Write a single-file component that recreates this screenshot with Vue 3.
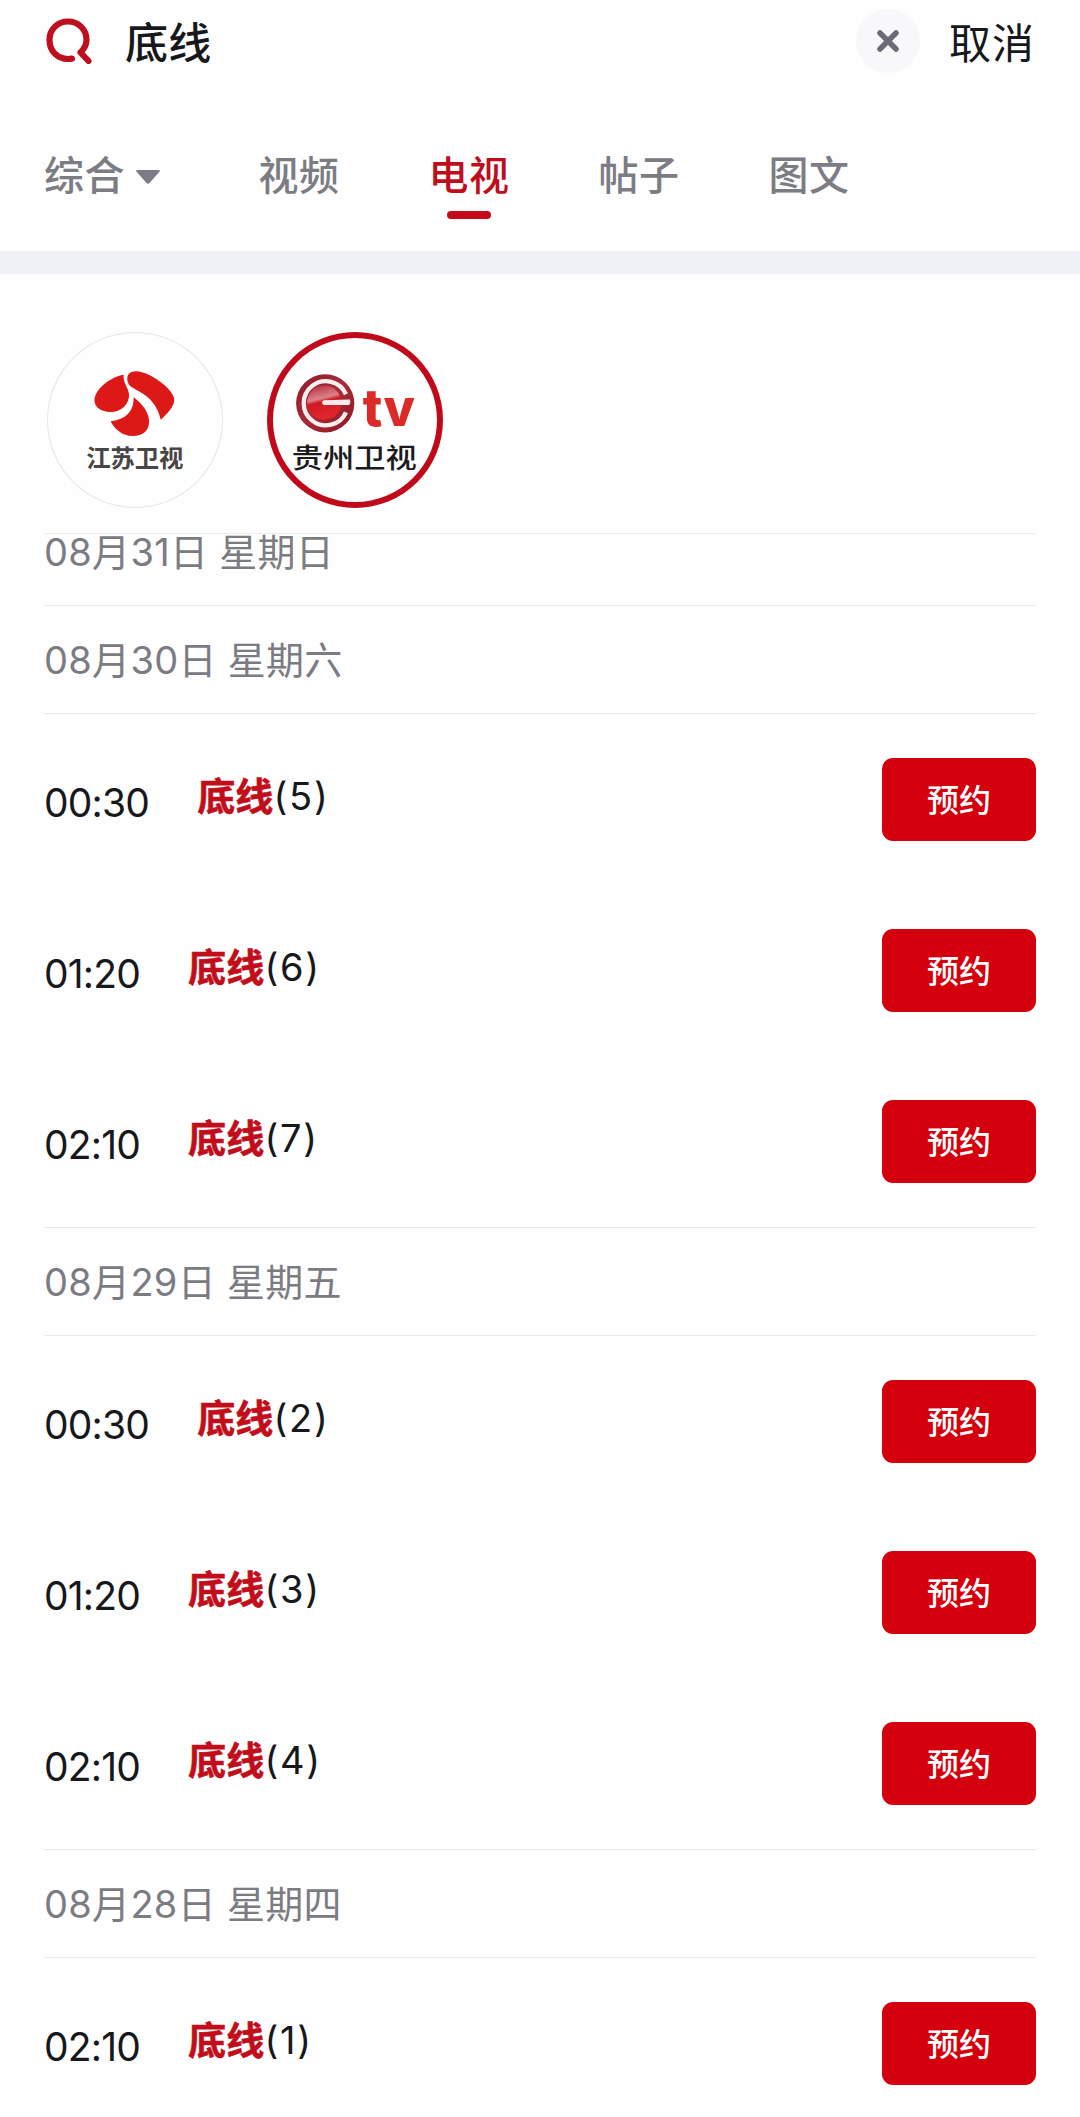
<script setup>
    import { ref } from 'vue';

    const keyword = ref('底线');
    const activeTab = ref('tv');
    const activeChannel = ref('guizhou');

    const tabs = [
        { id: 'all', label: '综合', dropdown: true },
        { id: 'video', label: '视频' },
        { id: 'tv', label: '电视' },
        { id: 'post', label: '帖子' },
        { id: 'article', label: '图文' }
    ]

    const days = [
        { date: '08月31日 星期日', shows: [] },
        {
            date: '08月30日 星期六',
            shows: [
                { time: '00:30', episode: 5 },
                { time: '01:20', episode: 6 },
                { time: '02:10', episode: 7 }
            ]
        },
        {
            date: '08月29日 星期五',
            shows: [
                { time: '00:30', episode: 2 },
                { time: '01:20', episode: 3 },
                { time: '02:10', episode: 4 }
            ]
        },
        {
            date: '08月28日 星期四',
            shows: [
                { time: '02:10', episode: 1 }
            ]
        }
    ]
</script>

<template>
    <div class="page">
        <header class="search-bar">
            <svg class="search-icon" viewBox="0 0 46 46">
                <path d="M26 40.6 C12 43 3.5 33 3.5 22 C3.5 11 12 3.5 22 3.5 C32 3.5 40.5 11 40.5 22 C40.5 27 38 31 34.5 34.5 L42.5 43" />
            </svg>
            <span class="keyword">{{ keyword }}</span>
            <button class="clear-button" @click="keyword = ''">
                <svg viewBox="0 0 24 24">
                    <path d="M4 4 L20 20 M20 4 L4 20" />
                </svg>
            </button>
            <button class="cancel-button">取消</button>
        </header>

        <nav class="tabs">
            <button
                v-for="tab in tabs"
                :key="tab.id"
                class="tab"
                :class="{ active: tab.id === activeTab, dropdown: tab.dropdown }"
                @click="activeTab = tab.id"
            >
                <span>{{ tab.label }}</span>
                <svg v-if="tab.dropdown" class="arrow" viewBox="0 0 24 14">
                    <path d="M1.5 0 H22.5 Q25 0 23 2.2 L13.5 13 Q12 14.6 10.5 13 L1 2.2 Q-1 0 1.5 0 Z" />
                </svg>
            </button>
        </nav>

        <div class="channels">
            <button class="channel" :class="{ selected: activeChannel === 'jiangsu' }" @click="activeChannel = 'jiangsu'">
                <svg viewBox="0 0 526 526">
                    <g fill="#dc1917">
                        <path d="M229 128 C190 134 142 172 142 205 C142 226 163 239 190 239 C225 239 247 213 245 185 C243 165 227 154 229 128 Z" />
                        <path d="M241 148 C236 127 248 116 268 117 C306 119 372 165 380 198 C384 222 356 247 340 262 C331 223 309 196 276 178 C257 167 245 163 241 148 Z" />
                        <path d="M259 195 C290 219 306 244 305 270 C304 297 285 311 257 311 C224 311 203 291 190 267 C226 263 260 245 259 195 Z" />
                    </g>
                    <text class="jiangsu-name" x="117" y="403" textLength="291">江苏卫视</text>
                </svg>
            </button>
            <button class="channel" :class="{ selected: activeChannel === 'guizhou' }" @click="activeChannel = 'guizhou'">
                <svg viewBox="0 0 526 526">
                    <defs>
                        <linearGradient id="rim" x1="0" y1="0" x2="1" y2="1">
                            <stop offset="0" stop-color="#8e1c2a" />
                            <stop offset="0.5" stop-color="#a82c38" />
                            <stop offset="1" stop-color="#8e1420" />
                        </linearGradient>
                        <linearGradient id="ball" x1="0" y1="0" x2="0.25" y2="1">
                            <stop offset="0" stop-color="#b52434" />
                            <stop offset="0.45" stop-color="#dc8288" />
                            <stop offset="0.55" stop-color="#cf1a25" />
                            <stop offset="1" stop-color="#e0262b" />
                        </linearGradient>
                    </defs>
                    <circle cx="174" cy="213" r="87" fill="url(#rim)" />
                    <path d="M236 186 A66 66 0 1 0 236 240" fill="none" stroke="#f9eeee" stroke-width="13" />
                    <circle cx="171" cy="211" r="51" fill="url(#ball)" />
                    <path d="M169 204 L248 202 Q252 210 246 218 L169 218 Q160 211 169 204 Z" fill="#f8e9ea" />
                    <text class="tv-mark" x="286" y="282" textLength="156" lengthAdjust="spacingAndGlyphs">tv</text>
                    <text class="guizhou-name" x="74" y="405" textLength="374" lengthAdjust="spacingAndGlyphs">贵州卫视</text>
                </svg>
            </button>
        </div>

        <main class="schedule">
            <section v-for="day in days" :key="day.date" class="day">
                <h2 class="date">{{ day.date }}</h2>
                <ul v-if="day.shows.length" class="shows">
                    <li v-for="show in day.shows" :key="show.episode" class="show">
                        <span class="time">{{ show.time }}</span>
                        <span class="title"><em>底线</em>({{ show.episode }})</span>
                        <button class="book-button">预约</button>
                    </li>
                </ul>
            </section>
        </main>
    </div>
</template>

<style>
    body {
        background-color: #fefefe;
    }
</style>

<style scoped>
    .page {
        height: 2117px;
        overflow: hidden;
        font-family: Inter, "Noto Sans CJK SC", sans-serif;
        color: #17181c;
    }

    button {
        padding: 0;
        border: none;
        background: none;
        font-family: inherit;
        color: inherit;
    }

    .search-bar {
        display: flex;
        align-items: center;
        height: 82px;
        padding: 0 45px 0 46px;
    }

    .search-icon {
        width: 46px;
        height: 46px;
        fill: none;
        stroke: #bd0f1e;
        stroke-width: 6.2;
        stroke-linecap: round;
        stroke-linejoin: round;
    }

    .keyword {
        flex: 1;
        margin-left: 33px;
        padding-bottom: 3px;
        font-size: 43px;
        font-weight: 500;
        letter-spacing: 0.3px;
    }

    .clear-button {
        display: flex;
        align-items: center;
        justify-content: center;
        width: 64px;
        height: 64px;
        border-radius: 50%;
        background-color: #f8f8fa;
    }

    .clear-button svg {
        width: 24px;
        height: 24px;
        stroke: #6b6b78;
        stroke-width: 5.5;
        stroke-linecap: round;
    }

    .cancel-button {
        margin-left: 29px;
        padding-bottom: 2px;
        font-size: 42px;
        letter-spacing: 1px;
    }

    .tabs {
        display: flex;
        gap: 88px;
        height: 169px;
        padding-left: 44px;
        border-bottom: 23px solid #eff1f6;
    }

    .tab {
        display: flex;
        flex-direction: column;
        align-items: center;
        width: 82px;
        padding-top: 63px;
        font-size: 40px;
        font-weight: 500;
        line-height: 61px;
        letter-spacing: 0.5px;
        white-space: nowrap;
        color: #7b7c84;
    }

    .tab.dropdown {
        flex-direction: row;
        align-items: flex-start;
        width: 126px;
        gap: 11px;
    }

    .tab.active {
        color: #c00d1c;
    }

    .tab.active::after {
        content: "";
        width: 44px;
        height: 8px;
        margin-top: 5px;
        border-radius: 4px;
        background-color: #c60a1a;
    }

    .arrow {
        width: 24px;
        height: 14px;
        margin-top: 25px;
        fill: #7b7c88;
    }

    .channels {
        display: flex;
        gap: 44px;
        height: 201px;
        padding: 58px 47px 0;
    }

    .channel {
        display: flex;
        width: 176px;
        height: 176px;
        border-radius: 50%;
        box-shadow: inset 0 0 0 1px #e6e6e8;
    }

    .channel.selected {
        box-shadow: inset 0 0 0 6px #c00a1b;
    }

    .channel svg {
        width: 176px;
        height: 176px;
    }

    .jiangsu-name {
        font-size: 73px;
        font-weight: 700;
        fill: #484545;
    }

    .guizhou-name {
        font-size: 80px;
        font-weight: 500;
        fill: #1c1a1b;
    }

    .tv-mark {
        font-size: 154px;
        font-weight: 800;
        fill: #dc2a26;
    }

    .schedule {
        margin: 0 44px;
        border-top: 1px solid #ececee;
    }

    .date {
        height: 107px;
        margin: 0;
        border-bottom: 1px solid #e9e9eb;
        font-size: 38px;
        font-weight: 400;
        letter-spacing: 0.3px;
        line-height: 109px;
        color: #7b7b82;
    }

    /* the first day sits right under the channel row */
    .day:first-child .date {
        height: 71px;
        line-height: 37px;
    }

    .shows {
        margin: 0;
        padding: 0;
        list-style: none;
        border-bottom: 1px solid #e9e9eb;
    }

    .show {
        display: flex;
        align-items: center;
        height: 171px;
    }

    .time {
        padding-top: 7px;
        font-size: 39px;
        line-height: 48px;
        letter-spacing: -0.8px;
    }

    .title {
        flex: 1;
        margin-left: 48px;
        padding-bottom: 8px;
        font-size: 38px;
        line-height: 56px;
        letter-spacing: 1.7px;
    }

    .title em {
        font-style: normal;
        font-weight: 700;
        letter-spacing: 0.2px;
        color: #c20d1b;
        -webkit-text-stroke: 0.6px #c20d1b;
    }

    .book-button {
        width: 154px;
        height: 83px;
        padding-bottom: 3px;
        border-radius: 11px;
        background-color: #d4000d;
        font-size: 32px;
        font-weight: 500;
        color: #fff;
    }
</style>
